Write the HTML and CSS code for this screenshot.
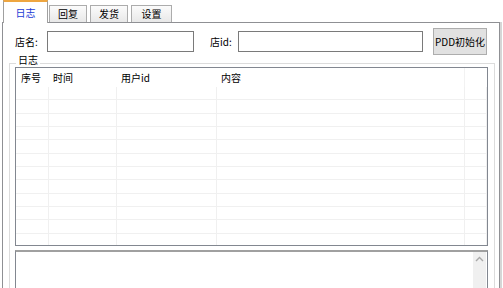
FILE: index.html
```html
<!DOCTYPE html>
<html lang="zh-CN">
<head>
    <meta charset="UTF-8">
    <meta name="viewport" content="width=device-width, initial-scale=1.0">
    <title>PDD</title>
    <link rel="stylesheet" href="styles.css">
</head>
<body>
    <div class="window">
        <div class="tabs">
            <div class="tab active">日志</div>
            <div class="tab">回复</div>
            <div class="tab">发货</div>
            <div class="tab wide">设置</div>
        </div>
        <div class="panel">
            <div class="form-row">
                <label class="label">店名:</label>
                <input class="field name" type="text">
                <label class="label id-label">店id:</label>
                <input class="field shop" type="text">
                <button class="btn">PDD初始化</button>
            </div>

            <div class="group">
                <span class="group-title">日志</span>
                <div class="listview">
                    <div class="row head">
                        <div>序号</div>
                        <div>时间</div>
                        <div>用户id</div>
                        <div>内容</div>
                        <div></div>
                    </div>
                    <div class="rows" id="rows"></div>
                </div>
                <div class="log">
                    <div class="scrollbar">
                        <svg width="9" height="6" viewBox="0 0 9 6"><path d="M1 5 L4.5 1.5 L8 5" fill="none" stroke="#a8a8a8" stroke-width="1.4"/></svg>
                    </div>
                </div>
            </div>
        </div>
    </div>

    <script>
        const rows = document.getElementById('rows');
        for (let i = 0; i < 12; i++) {
            const row = document.createElement('div');
            row.className = 'row';
            for (let c = 0; c < 5; c++) {
                row.appendChild(document.createElement('div'));
            }
            rows.appendChild(row);
        }
    </script>
</body>
</html>
```

FILE: styles.css
```css
* {
    margin: 0;
    padding: 0;
    box-sizing: border-box;
    font-family: 'Noto Sans CJK SC', 'DejaVu Sans', sans-serif;
}

body {
    background: #fff;
    font-size: 10px;
    color: #000;
}

.window {
    width: 503px;
    height: 288px;
    overflow: hidden;
}

.tabs {
    display: flex;
    align-items: flex-end;
    height: 22px;
    padding-left: 3px;
    gap: 3px;
}

.tab {
    width: 38px;
    height: 17px;
    line-height: 16px;
    text-align: center;
    border: 1px solid #acacac;
    border-bottom: none;
    background: linear-gradient(#fbfbfb, #e8e8e8);
}

.tab.wide {
    width: 41px;
}

.tab.active {
    position: relative;
    z-index: 1;
    width: 45px;
    height: 23px;
    margin-bottom: -1px;
    margin-right: -2px;
    line-height: 21px;
    color: #1a3bd6;
    background: #fff;
    border-color: #a0a0a0;
    border-top: 2px solid #eea640;
}

.panel {
    margin-left: 2px;
    width: 498px;
    height: 266px;
    border: 1px solid #8f9094;
    border-bottom: none;
    box-shadow: 2px 0 0 #d6d6d6;
}

.form-row {
    display: flex;
    align-items: center;
    height: 27px;
    margin-top: 5px;
    padding-left: 12px;
}

.label {
    width: 32px;
}

.id-label {
    width: 28px;
    margin-left: 16px;
}

.field {
    height: 21px;
    border: 1px solid #7a7a7a;
    background: #fff;
    outline: none;
}

.name {
    width: 147px;
}

.shop {
    width: 185px;
}

.btn {
    width: 54px;
    height: 27px;
    margin-left: 10px;
    font-size: 10px;
    white-space: nowrap;
    background: #e1e1e1;
    border: 1px solid #adadad;
    color: #000;
}

.group {
    position: relative;
    margin: 8px 0 0 6px;
    width: 486px;
    height: 240px;
    border: 1px solid #dcdcdc;
    padding: 3px 0 0 5px;
}

.group-title {
    position: absolute;
    left: 6px;
    top: -10px;
    padding: 0 2px;
    background: #fff;
    line-height: 12px;
}

.listview {
    width: 473px;
    height: 179px;
    border: 1px solid #828790;
    overflow: hidden;
}

.row {
    display: grid;
    grid-template-columns: 33px 68px 100px 248px 1fr;
    height: 13.33px;
    border-bottom: 1px solid #f0f0f0;
}

.row div {
    border-right: 1px solid #f0f0f0;
}

.row.head {
    height: 19px;
    border-bottom: none;
    line-height: 19px;
}

.row.head div {
    border-right-color: #fff;
    padding-left: 4px;
}

.row.head div:first-child {
    padding-left: 5px;
}

.row.head div:nth-child(4) {
    border-right-color: #f2f2f2;
}

.log {
    display: flex;
    justify-content: flex-end;
    margin-top: 4px;
    width: 473px;
    height: 60px;
    border: 1px solid #828790;
    border-top: 2px solid #a0a0a0;
    padding-right: 1px;
}

.scrollbar {
    width: 13px;
    background: #f0f0f0;
    display: flex;
    justify-content: center;
    padding-top: 4px;
}
```
